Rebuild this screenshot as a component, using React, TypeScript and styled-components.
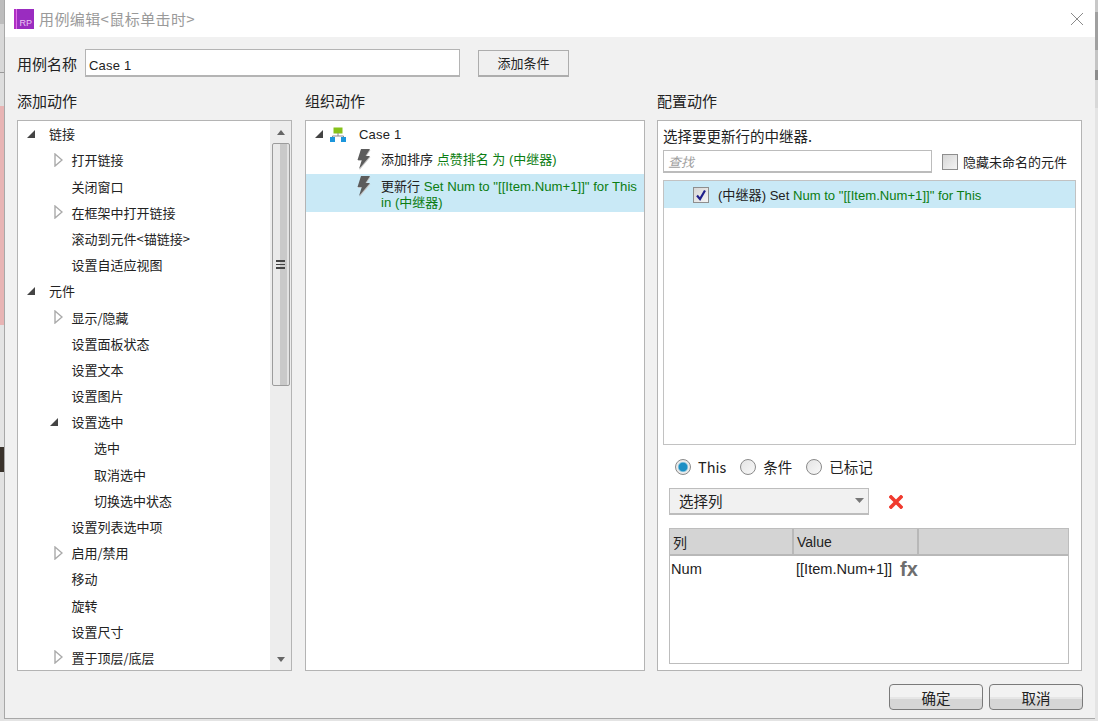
import React from 'react';
import styled, { createGlobalStyle } from 'styled-components';

const Global = createGlobalStyle`
  html, body { margin: 0; padding: 0; width: 1098px; height: 721px; overflow: hidden; }
  body { font-family: "Liberation Sans", "Noto Sans CJK SC", sans-serif; font-size: 13px; color: #222; }
  * { box-sizing: border-box; }
`;

const Desktop = styled.div`
  width: 1098px; height: 721px; padding: 0 3px 2px 4px; display: flex;
  background-color: #e4e4e4;
  background-image:
    linear-gradient(to bottom, #bdbdbd 0 24px, #d8d8d8 24px 72px, #999 72px 73px, #dedede 73px 106px, #e8b4b4 106px 325px, #e4e4e4 325px 447px, #3a332c 447px 472px, #e2e2e2 472px),
    linear-gradient(to bottom, #c8c8c8 0 12px, #a0a0a0 12px 50px, #c4c4c4 50px 70px, #8c8c8c 70px 80px, #d8d8d8 80px 108px, #e4e4e4 108px);
  background-size: 4px 100%, 3px 100%;
  background-position: left top, right top;
  background-repeat: no-repeat;
`;
const Dialog = styled.div`
  width: 1091px; height: 719px; display: flex; flex-direction: column;
  background: #f1f1f1; border-left: 1px solid #a8a8a8; border-bottom: 1px solid #a8a8a8;
`;
const TitleBar = styled.div`
  height: 37px; background: #fff; display: flex; align-items: center; padding: 0 11px 0 9px; gap: 5px; flex: none;
`;
const Logo = styled.div`
  width: 20px; height: 20px; flex: none; display: flex; align-items: flex-end; justify-content: flex-end;
  background: linear-gradient(to right, #b02fc4 0 2px, #e06ce8 2px 3px, #9a2cc0 3px);
  color: #eac6f2; font-size: 9px; line-height: 12px; padding-right: 2px;
`;
const TitleText = styled.div`
  font-size: 15px; color: #9a9a9a; flex: 1; white-space: nowrap; letter-spacing: 0.4px; font-family: "Noto Sans CJK SC", "Liberation Sans", sans-serif; line-height: 20px;
`;
const Body = styled.div`
  flex: 1; display: flex; flex-direction: column; padding: 12px 12px 0 12px; min-height: 0;
`;
const NameRow = styled.div`
  display: flex; align-items: center; height: 28px; flex: none;
`;
const Label = styled.div`
  font-size: 15px; line-height: 20px; white-space: nowrap; font-family: "Noto Sans CJK SC", sans-serif; color: #222;
`;
const NameLabel = styled(Label)`
  padding-top: 2px;
`;
const NameInput = styled.div`
  width: 375px; height: 28px; margin-left: 8px; background: #fff; border: 1px solid #b4b4b4; border-bottom-width: 2px;
  display: flex; align-items: center; padding: 5px 0 0 3px; font-size: 13px; letter-spacing: 0.2px;
`;
const CondButton = styled.div`
  width: 91px; height: 27px; margin-left: 18px; background: #f0f0f0; border: 1px solid #adadad; border-bottom-width: 2px;
  display: flex; align-items: center; justify-content: center; font-size: 13px; font-family: "Noto Sans CJK SC", sans-serif;
`;
const Columns = styled.div`
  display: flex; margin-top: 14px; flex: none;
`;
const Column = styled.div<{ $width: number; $after: number }>`
  display: flex; flex-direction: column; gap: 9px; width: ${p => p.$width}px; margin-right: ${p => p.$after}px; flex: none;
`;
const Panel = styled.div`
  height: 551px; background: #fff; border: 1px solid #b4b4b4; overflow: hidden; position: relative;
`;
const LeftPanel = styled(Panel)`
  display: flex;
`;
const TreeList = styled.div`
  flex: 1; min-width: 0; margin-top: -0.4px;
`;
const TreeRow = styled.div<{ $level: number }>`
  height: 26.2px; display: flex; align-items: center; white-space: nowrap; font-size: 13px;
  font-family: "Noto Sans CJK SC", "Liberation Sans", sans-serif;
  padding-left: ${p => 8 + p.$level * 22.5}px;
`;
const Twist = styled.span`
  width: 23px; flex: none; display: flex; align-items: center;
`;
const Scrollbar = styled.div`
  width: 21px; flex: none; background: #ededed; display: flex; flex-direction: column; align-items: center;
`;
const ScrollArrow = styled.div`
  height: 22px; flex: none; display: flex; align-items: center; justify-content: center;
`;
const ScrollThumb = styled.div`
  width: 18px; height: 243px; flex: none; border: 1px solid #9c9c9c; border-radius: 2px;
  background: linear-gradient(to right, #eaeaea 0 45%, #c9c9c9 45% 85%, #e2e2e2 85%);
  display: flex; flex-direction: column; align-items: center; justify-content: center; gap: 2px;
`;
const Grip = styled.i`
  display: block; width: 9px; height: 1.5px; background: #444;
`;
const ScrollSpacer = styled.div`
  flex: 1;
`;
const ActionRow = styled.div<{ $selected?: boolean }>`
  display: flex; align-items: flex-start; font-size: 13.2px; line-height: 16px;
  font-family: "Liberation Sans", "Noto Sans CJK SC", sans-serif;
  background: ${p => (p.$selected ? '#c9e9f6' : 'transparent')};
  padding: ${p => (p.$selected ? '5px 0 1px 50px' : '5px 0 6px 50px')};
`;
const BoltIcon = styled.svg`
  flex: none; margin: -3px 0 -2px;
`;
const CaseRow = styled.div`
  height: 26px; display: flex; align-items: center; padding-left: 8px; font-size: 13px; letter-spacing: 0.2px;
`;
const CaseIconSvg = styled.svg`
  margin-left: 6px;
`;
const CaseName = styled.span`
  margin-left: 13px;
`;
const ActionText = styled.div`
  margin-left: 10px; width: 262px;
`;
const Cjk13 = styled.span`
  font-size: 13px;
`;
const Green = styled.span`
  color: #0b7d12;
`;
const ConfigPanel = styled(Panel)`
  padding: 0 5px; display: flex; flex-direction: column;
`;
const ConfigTitle = styled.div`
  height: 29px; display: flex; align-items: center; font-size: 14.5px; font-family: "Noto Sans CJK SC", sans-serif; flex: none;
`;
const SearchRow = styled.div`
  height: 23px; display: flex; align-items: center; flex: none;
`;
const SearchBox = styled.div`
  width: 269px; height: 23px; background: #fff; border: 1px solid #bcbcbc; border-bottom-width: 2px; padding-left: 4px;
  display: flex; align-items: center; color: #a0a0a0; font-style: italic; font-size: 13px;
  font-family: "Noto Sans CJK SC", sans-serif;
`;
const CheckBox = styled.span`
  width: 16px; height: 16px; flex: none; border: 1px solid #8e8e8e; display: inline-flex; align-items: center; justify-content: center;
  background: linear-gradient(135deg, #d6d6d6, #f4f4f4);
`;
const HideBox = styled(CheckBox)`
  margin-left: 10px;
`;
const HideLabel = styled.span`
  margin-left: 5px; font-size: 13px; white-space: nowrap; font-family: "Noto Sans CJK SC", sans-serif;
`;
const TargetList = styled.div`
  width: 413px; height: 265px; margin-top: 7px; border: 1px solid #c2c2c2; flex: none;
`;
const TargetRow = styled.div`
  height: 27px; background: #c9e9f6; display: flex; align-items: center; padding-left: 29px; white-space: nowrap;
  font-size: 13.1px; font-family: "Liberation Sans", "Noto Sans CJK SC", sans-serif;
`;
const TargetText = styled.span`
  margin-left: 9px; padding-bottom: 1px;
`;
const RadioRow = styled.div`
  display: flex; align-items: center; height: 22px; margin-top: 11px; padding-left: 12px; flex: none;
`;
const Radio = styled.span<{ $on?: boolean }>`
  width: 16px; height: 16px; border-radius: 50%; border: 1px solid #8a8a8a; flex: none;
  background: ${p => (p.$on ? 'radial-gradient(circle, #1d8fc4 0 4px, #6fb9d8 4.5px, #eaeaea 5.5px)' : 'linear-gradient(135deg,#e4e4e4,#f8f8f8)')};
`;
const RadioLabel = styled.span`
  margin: 0 14px 0 7px; padding-bottom: 2px; font-size: 14.5px; font-family: "Noto Sans CJK SC", "Liberation Sans", sans-serif; white-space: nowrap;
`;
const SelectRow = styled.div`
  display: flex; align-items: center; margin-top: 10px; padding-left: 6px; flex: none;
`;
const Select = styled.div`
  width: 200px; height: 27px; background: #f1f1f1; border: 1px solid #bdbdbd; border-bottom-width: 2px;
  display: flex; align-items: center; justify-content: space-between; padding: 0 4px 2px 9px;
  font-size: 14.5px; font-family: "Noto Sans CJK SC", sans-serif;
`;
const DeleteIcon = styled.svg`
  margin-left: 20px; flex: none;
`;
const Table = styled.div`
  width: 400px; height: 136px; margin: 13px 0 0 6px; border: 1px solid #bdbdbd; flex: none; display: flex; flex-direction: column;
`;
const TableHead = styled.div`
  height: 27px; background: #d4d4d4; border-bottom: 2px solid #b8b8b8; display: grid; grid-template-columns: 124px 125px 1fr; flex: none;
`;
const HeadCell = styled.div`
  display: flex; align-items: center; padding-left: 3px; border-right: 2px solid #b8b8b8; font-size: 14px;
  font-family: "Liberation Sans", "Noto Sans CJK SC", sans-serif;
  &:last-child { border-right: 0; }
`;
const TableRow = styled.div`
  height: 25px; display: grid; grid-template-columns: 126px 1fr; align-items: center; font-size: 14.6px; flex: none; background: #fff;
`;
const NumCell = styled.div`
  padding-left: 1px;
`;
const ValueCell = styled.div`
  display: flex; align-items: center;
`;
const Fx = styled.span`
  margin-left: 8px; font-weight: 700; font-size: 20px; color: #6e6e6e; line-height: 16px;
`;
const Footer = styled.div`
  display: flex; justify-content: flex-end; gap: 6px; margin-top: 13px; flex: none;
`;
const FootButton = styled.div`
  width: 94px; height: 26px; border: 1px solid #7a7a7a; border-radius: 4px;
  background: linear-gradient(to bottom, #f2f2f2 0 50%, #e6e6e6 50% 60%, #d6d6d6 60%);
  display: flex; align-items: center; justify-content: center; font-size: 14.5px; font-family: "Noto Sans CJK SC", sans-serif;
`;

const Expanded = () => (
  <svg width="10" height="10" viewBox="0 0 10 10"><path d="M9 1 V9 H1 Z" fill="#444" /></svg>
);
const Collapsed = () => (
  <svg width="9" height="14" viewBox="0 0 9 14" style={{ marginLeft: 5 }}><path d="M1 1 L8 7 L1 13 Z" fill="#fff" stroke="#aaa" strokeWidth="1.4" /></svg>
);
const Bolt = () => (
  <BoltIcon width="15" height="21" viewBox="0 0 15 21">
    <path d="M5 1 H14.5 L10 8 H14.5 L3.5 21 L6.3 12 H2 Z" fill="#c4c4c4" />
    <path d="M5 0 H14 L9.5 7 H14 L3 20 L5.8 11 H1.5 Z" fill="#5c5c5c" />
  </BoltIcon>
);
const CaseIcon = () => (
  <CaseIconSvg width="16" height="15" viewBox="0 0 16 15">
    <rect x="3.5" y="0.5" width="9" height="6" fill="#86c21a" />
    <path d="M8 6 V9 M2.5 11 V9 H13.5 V11" fill="none" stroke="#8a8a8a" />
    <rect x="0" y="10" width="5" height="5" fill="#1b96dc" />
    <rect x="11" y="10" width="5" height="5" fill="#1b96dc" />
  </CaseIconSvg>
);
const Check = () => (
  <svg width="12" height="12" viewBox="0 0 12 12"><path d="M2 6.5 L5 10 L10 1.5" fill="none" stroke="#20208c" strokeWidth="2.2" /></svg>
);

const tree: { level: number; text: string; twist?: 'open' | 'closed' }[] = [
  { level: 0, text: '链接', twist: 'open' },
  { level: 1, text: '打开链接', twist: 'closed' },
  { level: 1, text: '关闭窗口' },
  { level: 1, text: '在框架中打开链接', twist: 'closed' },
  { level: 1, text: '滚动到元件<锚链接>' },
  { level: 1, text: '设置自适应视图' },
  { level: 0, text: '元件', twist: 'open' },
  { level: 1, text: '显示/隐藏', twist: 'closed' },
  { level: 1, text: '设置面板状态' },
  { level: 1, text: '设置文本' },
  { level: 1, text: '设置图片' },
  { level: 1, text: '设置选中', twist: 'open' },
  { level: 2, text: '选中' },
  { level: 2, text: '取消选中' },
  { level: 2, text: '切换选中状态' },
  { level: 1, text: '设置列表选中项' },
  { level: 1, text: '启用/禁用', twist: 'closed' },
  { level: 1, text: '移动' },
  { level: 1, text: '旋转' },
  { level: 1, text: '设置尺寸' },
  { level: 1, text: '置于顶层/底层', twist: 'closed' },
];

export default function App() {
  return (
    <Desktop>
      <Global />
      <Dialog>
        <TitleBar>
          <Logo>RP</Logo>
          <TitleText>用例编辑&lt;鼠标单击时&gt;</TitleText>
          <svg width="14" height="14" viewBox="0 0 14 14"><path d="M1 1 L13 13 M13 1 L1 13" stroke="#8a8a8a" strokeWidth="1" fill="none" /></svg>
        </TitleBar>
        <Body>
          <NameRow>
            <NameLabel>用例名称</NameLabel>
            <NameInput>Case 1</NameInput>
            <CondButton>添加条件</CondButton>
          </NameRow>
          <Columns>
            <Column $width={275} $after={13}>
              <Label>添加动作</Label>
              <LeftPanel>
                <TreeList>
                  {tree.map(r => (
                    <TreeRow key={r.text} $level={r.level}>
                      <Twist>{r.twist === 'open' ? <Expanded /> : r.twist === 'closed' ? <Collapsed /> : null}</Twist>
                      {r.text}
                    </TreeRow>
                  ))}
                </TreeList>
                <Scrollbar>
                  <ScrollArrow>
                    <svg width="8" height="5" viewBox="0 0 8 5"><path d="M4 0 L8 5 H0 Z" fill="#666" /></svg>
                  </ScrollArrow>
                  <ScrollThumb><Grip /><Grip /><Grip /></ScrollThumb>
                  <ScrollSpacer />
                  <ScrollArrow>
                    <svg width="8" height="5" viewBox="0 0 8 5"><path d="M0 0 H8 L4 5 Z" fill="#666" /></svg>
                  </ScrollArrow>
                </Scrollbar>
              </LeftPanel>
            </Column>
            <Column $width={340} $after={12}>
              <Label>组织动作</Label>
              <Panel>
                <CaseRow>
                  <Expanded />
                  <CaseIcon />
                  <CaseName>Case 1</CaseName>
                </CaseRow>
                <ActionRow>
                  <Bolt />
                  <ActionText><Cjk13>添加排序</Cjk13> <Green><Cjk13>点赞排名 为 (中继器)</Cjk13></Green></ActionText>
                </ActionRow>
                <ActionRow $selected>
                  <Bolt />
                  <ActionText><Cjk13>更新行</Cjk13> <Green>Set Num to "[[Item.Num+1]]" for This in <Cjk13>(中继器)</Cjk13></Green></ActionText>
                </ActionRow>
              </Panel>
            </Column>
            <Column $width={425} $after={0}>
              <Label>配置动作</Label>
              <ConfigPanel>
                <ConfigTitle>选择要更新行的中继器.</ConfigTitle>
                <SearchRow>
                  <SearchBox>查找</SearchBox>
                  <HideBox />
                  <HideLabel>隐藏未命名的元件</HideLabel>
                </SearchRow>
                <TargetList>
                  <TargetRow>
                    <CheckBox><Check /></CheckBox>
                    <TargetText>(中继器) Set <Green>Num to "[[Item.Num+1]]" for This</Green></TargetText>
                  </TargetRow>
                </TargetList>
                <RadioRow>
                  <Radio $on /><RadioLabel>This</RadioLabel>
                  <Radio /><RadioLabel>条件</RadioLabel>
                  <Radio /><RadioLabel>已标记</RadioLabel>
                </RadioRow>
                <SelectRow>
                  <Select>
                    选择列
                    <svg width="9" height="5" viewBox="0 0 9 5"><path d="M0 0 H9 L4.5 5 Z" fill="#777" /></svg>
                  </Select>
                  <DeleteIcon width="14" height="14" viewBox="0 0 14 14">
                    <path d="M2 2 L12 12 M12 2 L2 12" stroke="#f03a2e" strokeWidth="3.6" strokeLinecap="square" fill="none" />
                  </DeleteIcon>
                </SelectRow>
                <Table>
                  <TableHead>
                    <HeadCell>列</HeadCell>
                    <HeadCell>Value</HeadCell>
                    <HeadCell />
                  </TableHead>
                  <TableRow>
                    <NumCell>Num</NumCell>
                    <ValueCell>[[Item.Num+1]]<Fx>fx</Fx></ValueCell>
                  </TableRow>
                </Table>
              </ConfigPanel>
            </Column>
          </Columns>
          <Footer>
            <FootButton>确定</FootButton>
            <FootButton>取消</FootButton>
          </Footer>
        </Body>
      </Dialog>
    </Desktop>
  );
}
